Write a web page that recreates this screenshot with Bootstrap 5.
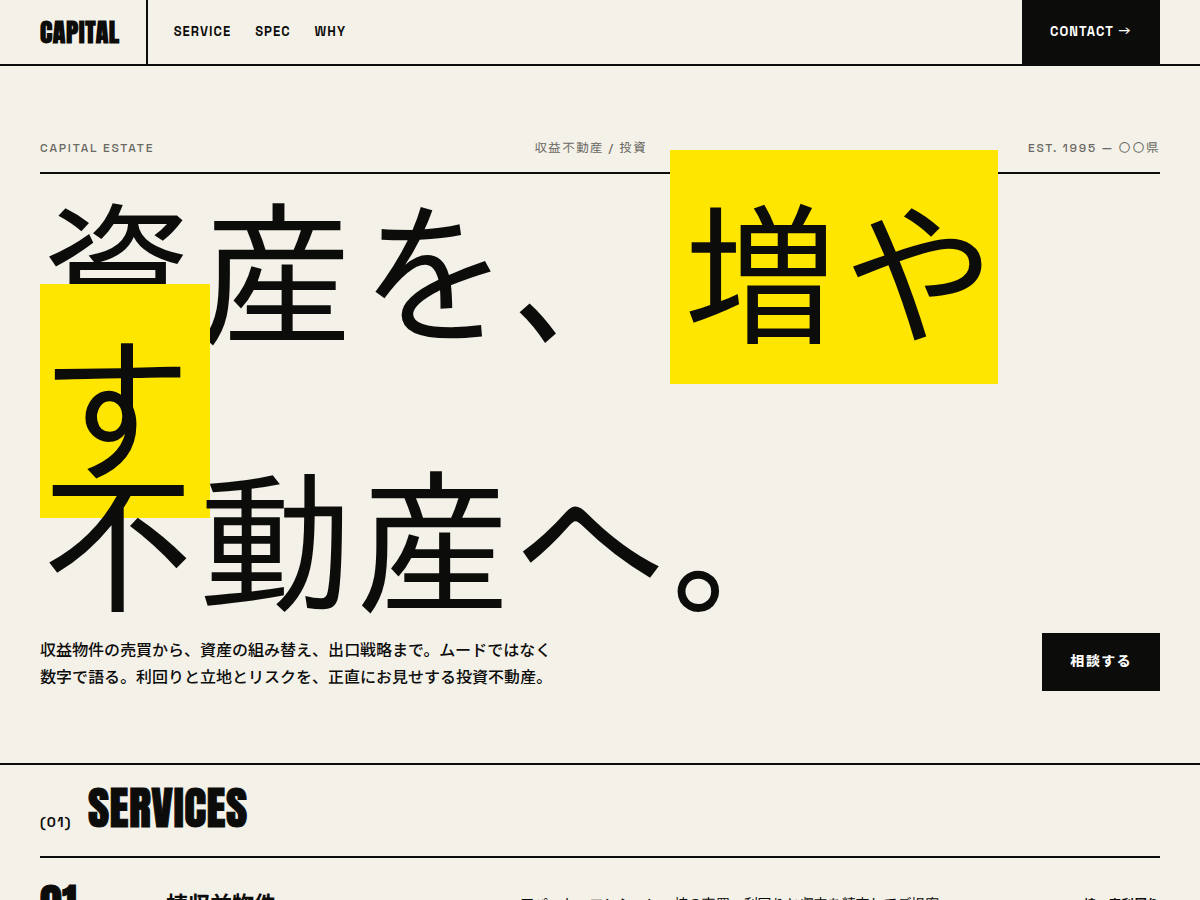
<!DOCTYPE html>
<html lang="ja">
<head>
<meta charset="utf-8">
<meta name="viewport" content="width=device-width, initial-scale=1">
<title>CAPITAL ESTATE</title>
<link href="https://cdn.jsdelivr.net/npm/bootstrap@5.3.0/dist/css/bootstrap.min.css" rel="stylesheet">
<style>
:root { --ink: #0c0c0a; --paper: #f4f1e9; --mark: #ffe600; }
body { background: var(--paper); color: var(--ink); font-family: "Space Grotesk", "Noto Sans JP", "Noto Sans CJK JP", sans-serif; overflow-x: hidden; }
.edge { padding-left: 40px; padding-right: 40px; }
.rule { border-bottom: 2px solid var(--ink); }
.face { font-family: Anton, IPAGothic, "Noto Sans CJK JP", sans-serif; font-weight: 400; line-height: 1; letter-spacing: .01em; }
.grotesk { font-family: "Space Grotesk", "BIZ UDGothic", "Noto Sans CJK JP", sans-serif; }
.topbar { height: 66px; }
.brand { font-size: 26px; font-weight: 700; letter-spacing: .02em; color: var(--ink); border-right: 2px solid var(--ink); padding-right: 26px; }
.menu { gap: 24px; padding-left: 26px; }
.menu a, .contact { font-size: 13px; font-weight: 700; letter-spacing: .08em; }
.menu a { color: var(--ink); }
.contact { background: var(--ink); color: #fff; padding: 0 28px; margin-bottom: -2px; padding-bottom: 2px; white-space: pre; }
.arrow { font-family: "BIZ UDGothic", sans-serif; }
.hero { padding-top: 72px; padding-bottom: 72px; }
.meta { font-size: 12px; line-height: 20px; font-weight: 500; letter-spacing: .15em; color: #6b6963; padding-bottom: 14px; }
.headline { font-size: 13vw; line-height: .86; margin: 26px 0 31px; }
.headline span { background: var(--mark); padding: 0 .08em; }
.intro { font-size: 16px; line-height: 27px; font-weight: 500; max-width: 520px; }
.ask { background: var(--ink); color: #fff; border: 0; font-size: 14px; line-height: 22px; font-weight: 800; letter-spacing: .1em; padding: 17px 28px 19px; }
.sechead { gap: 16px; padding: 20px 0 25px; }
.count { font-size: 14px; line-height: 18px; font-weight: 700; letter-spacing: .1em; }
.sectitle, .num { -webkit-text-stroke: 1px var(--ink); }
.sectitle { font-size: 46px; }
.service { display: grid; grid-template-columns: 80px 1fr 440px 176px; column-gap: 24px; align-items: center; padding: 24px 0; }
.num { font-size: 44px; }
.name { font-size: 22px; font-weight: 700; }
.desc { font-size: 14px; }
.tag { font-size: 12px; font-weight: 700; letter-spacing: .06em; text-align: right; }
</style>
</head>
<body>
<header class="topbar edge rule d-flex align-items-stretch">
  <a href="#" class="brand face d-flex align-items-center text-decoration-none fw-bold">CAPITAL</a>
  <nav class="menu grotesk d-flex align-items-center">
    <a href="#service" class="text-decoration-none">SERVICE</a>
    <a href="#spec" class="text-decoration-none">SPEC</a>
    <a href="#why" class="text-decoration-none">WHY</a>
  </nav>
  <a href="#contact" class="contact grotesk ms-auto d-flex align-items-center text-decoration-none">CONTACT <span class="arrow">→</span></a>
</header>
<main>
  <section class="hero edge rule">
    <div class="meta grotesk rule d-flex justify-content-between">
      <div>CAPITAL ESTATE</div><div>収益不動産 / 投資</div><div>EST. 1995 — 〇〇県</div>
    </div>
    <h1 class="headline face">資産を、<span>増やす</span><br>不動産へ。</h1>
    <div class="d-flex justify-content-between align-items-end">
      <p class="intro mb-0">収益物件の売買から、資産の組み替え、出口戦略まで。ムードではなく数字で語る。利回りと立地とリスクを、正直にお見せする投資不動産。</p>
      <button type="button" class="ask">相談する</button>
    </div>
  </section>
  <section id="service" class="edge">
    <div class="sechead rule d-flex align-items-baseline">
      <span class="count grotesk">(01)</span>
      <h2 class="sectitle face mb-0">SERVICES</h2>
    </div>
    <article class="service">
      <div class="num face">01</div>
      <h3 class="name mb-0">一棟収益物件</h3>
      <p class="desc mb-0">アパート・マンション一棟の売買。利回りと収支を精査してご提案。</p>
      <div class="tag">一棟 / 高利回り</div>
    </article>
  </section>
</main>
<script src="https://cdn.jsdelivr.net/npm/bootstrap@5.3.0/dist/js/bootstrap.bundle.min.js"></script>
</body>
</html>
